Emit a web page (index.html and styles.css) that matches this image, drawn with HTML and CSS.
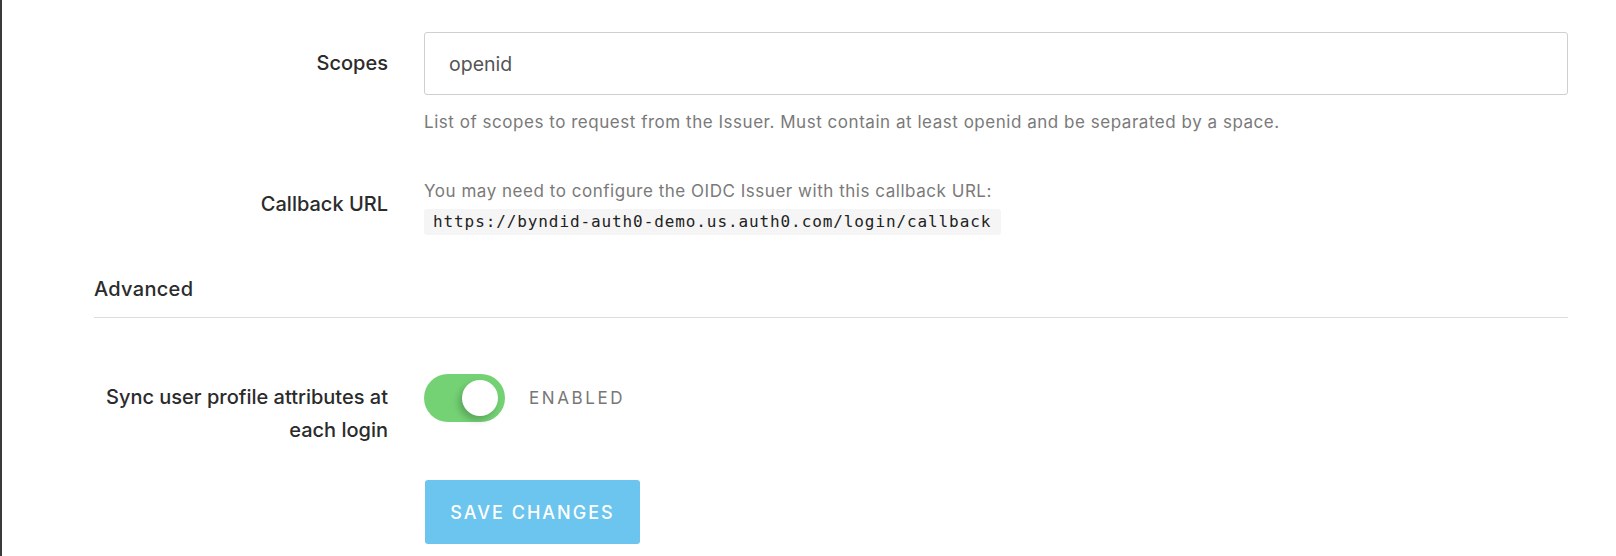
FILE: index.html
```html
<!DOCTYPE html>
<html lang="en">
<head>
<meta charset="utf-8">
<title>Connection settings</title>
<link rel="stylesheet" href="styles.css">
</head>
<body>
<div class="page">
  <form class="form">
    <div class="row row-scopes">
      <label class="label" for="scopes">Scopes</label>
      <div class="control">
        <input class="input" id="scopes" type="text" value="openid">
        <p class="help help-under">List of scopes to request from the Issuer. Must contain at least openid and be separated by a space.</p>
      </div>
    </div>

    <div class="row row-callback">
      <div class="label label-callback">Callback URL</div>
      <div class="control">
        <p class="help">You may need to configure the OIDC Issuer with this callback URL:</p>
        <code class="code">https://byndid-auth0-demo.us.auth0.com/login/callback</code>
      </div>
    </div>

    <h3 class="section">Advanced</h3>

    <div class="row row-sync">
      <div class="label label-sync">Sync user profile attributes at each login</div>
      <div class="control control-switch">
        <span class="switch"><span class="knob"></span></span>
        <span class="state">ENABLED</span>
      </div>
    </div>

    <div class="row row-actions">
      <div></div>
      <div class="control">
        <button class="btn" type="button">SAVE CHANGES</button>
      </div>
    </div>
  </form>
</div>
</body>
</html>
```

FILE: styles.css
```css
* { box-sizing: border-box; }

html, body {
  margin: 0;
  background: #fff;
}

body {
  font-family: "Inter", "Roboto", "Liberation Sans", sans-serif;
  color: #333;
}

.page {
  min-height: 556px;
  border-left: 2px solid #3a3a3a;
  padding: 32px 48px 0 92px;
}

.row {
  display: grid;
  grid-template-columns: 294px 1fr;
  column-gap: 36px;
}

.label {
  text-align: right;
  font-size: 20px;
  font-weight: 500;
  color: #2b2b2b;
}

.row-scopes .label {
  line-height: 63px;
}

.control {
  min-width: 0;
}

.input {
  display: block;
  width: 100%;
  height: 63px;
  border: 1px solid #cfcfcf;
  border-radius: 3px;
  padding: 0 24px;
  font-family: inherit;
  font-size: 19.5px;
  color: #555;
  background: #fff;
  outline: none;
}

.help {
  margin: 0;
  font-size: 17px;
  letter-spacing: 0.53px;
  line-height: 24px;
  color: #7a7a7a;
}

.help-under {
  margin-top: 15px;
}

.row-callback {
  margin-top: 45px;
}

.label-callback {
  padding-top: 12px;
  line-height: 27px;
}

.code {
  display: inline-block;
  margin-top: 6px;
  height: 26px;
  line-height: 26px;
  padding: 0 10px 0 9px;
  background: #f5f5f5;
  border-radius: 3px;
  font-family: "DejaVu Sans Mono", "Liberation Mono", monospace;
  font-size: 16px;
  letter-spacing: 0.9px;
  color: #222;
}

.section {
  margin: 40px 0 0;
  padding-bottom: 14px;
  border-bottom: 1px solid #dcdcdc;
  font-size: 20px;
  letter-spacing: 0.3px;
  line-height: 28px;
  font-weight: 500;
  color: #2b2b2b;
}

.row-sync {
  margin-top: 56px;
}

.label-sync {
  padding-top: 7px;
  line-height: 33px;
}

.control-switch {
  display: flex;
  align-items: center;
  gap: 24px;
  height: 48px;
}

.switch {
  position: relative;
  display: inline-block;
  width: 81px;
  height: 48px;
  border-radius: 24px;
  background: #74d274;
}

.knob {
  position: absolute;
  top: 6px;
  right: 7px;
  width: 36px;
  height: 36px;
  border-radius: 50%;
  background: #fff;
  box-shadow: -3px 4px 7px rgba(0, 0, 0, 0.22);
}

.state {
  font-size: 17px;
  letter-spacing: 2.6px;
  color: #777;
}

.row-actions {
  margin-top: 33px;
}

.btn {
  display: block;
  width: 215px;
  height: 64px;
  margin-left: 1px;
  border: 0;
  border-radius: 3px;
  background: #6bc5ee;
  color: #fff;
  font-family: inherit;
  font-size: 18px;
  font-weight: 500;
  letter-spacing: 2px;
  padding: 0;
}
```
